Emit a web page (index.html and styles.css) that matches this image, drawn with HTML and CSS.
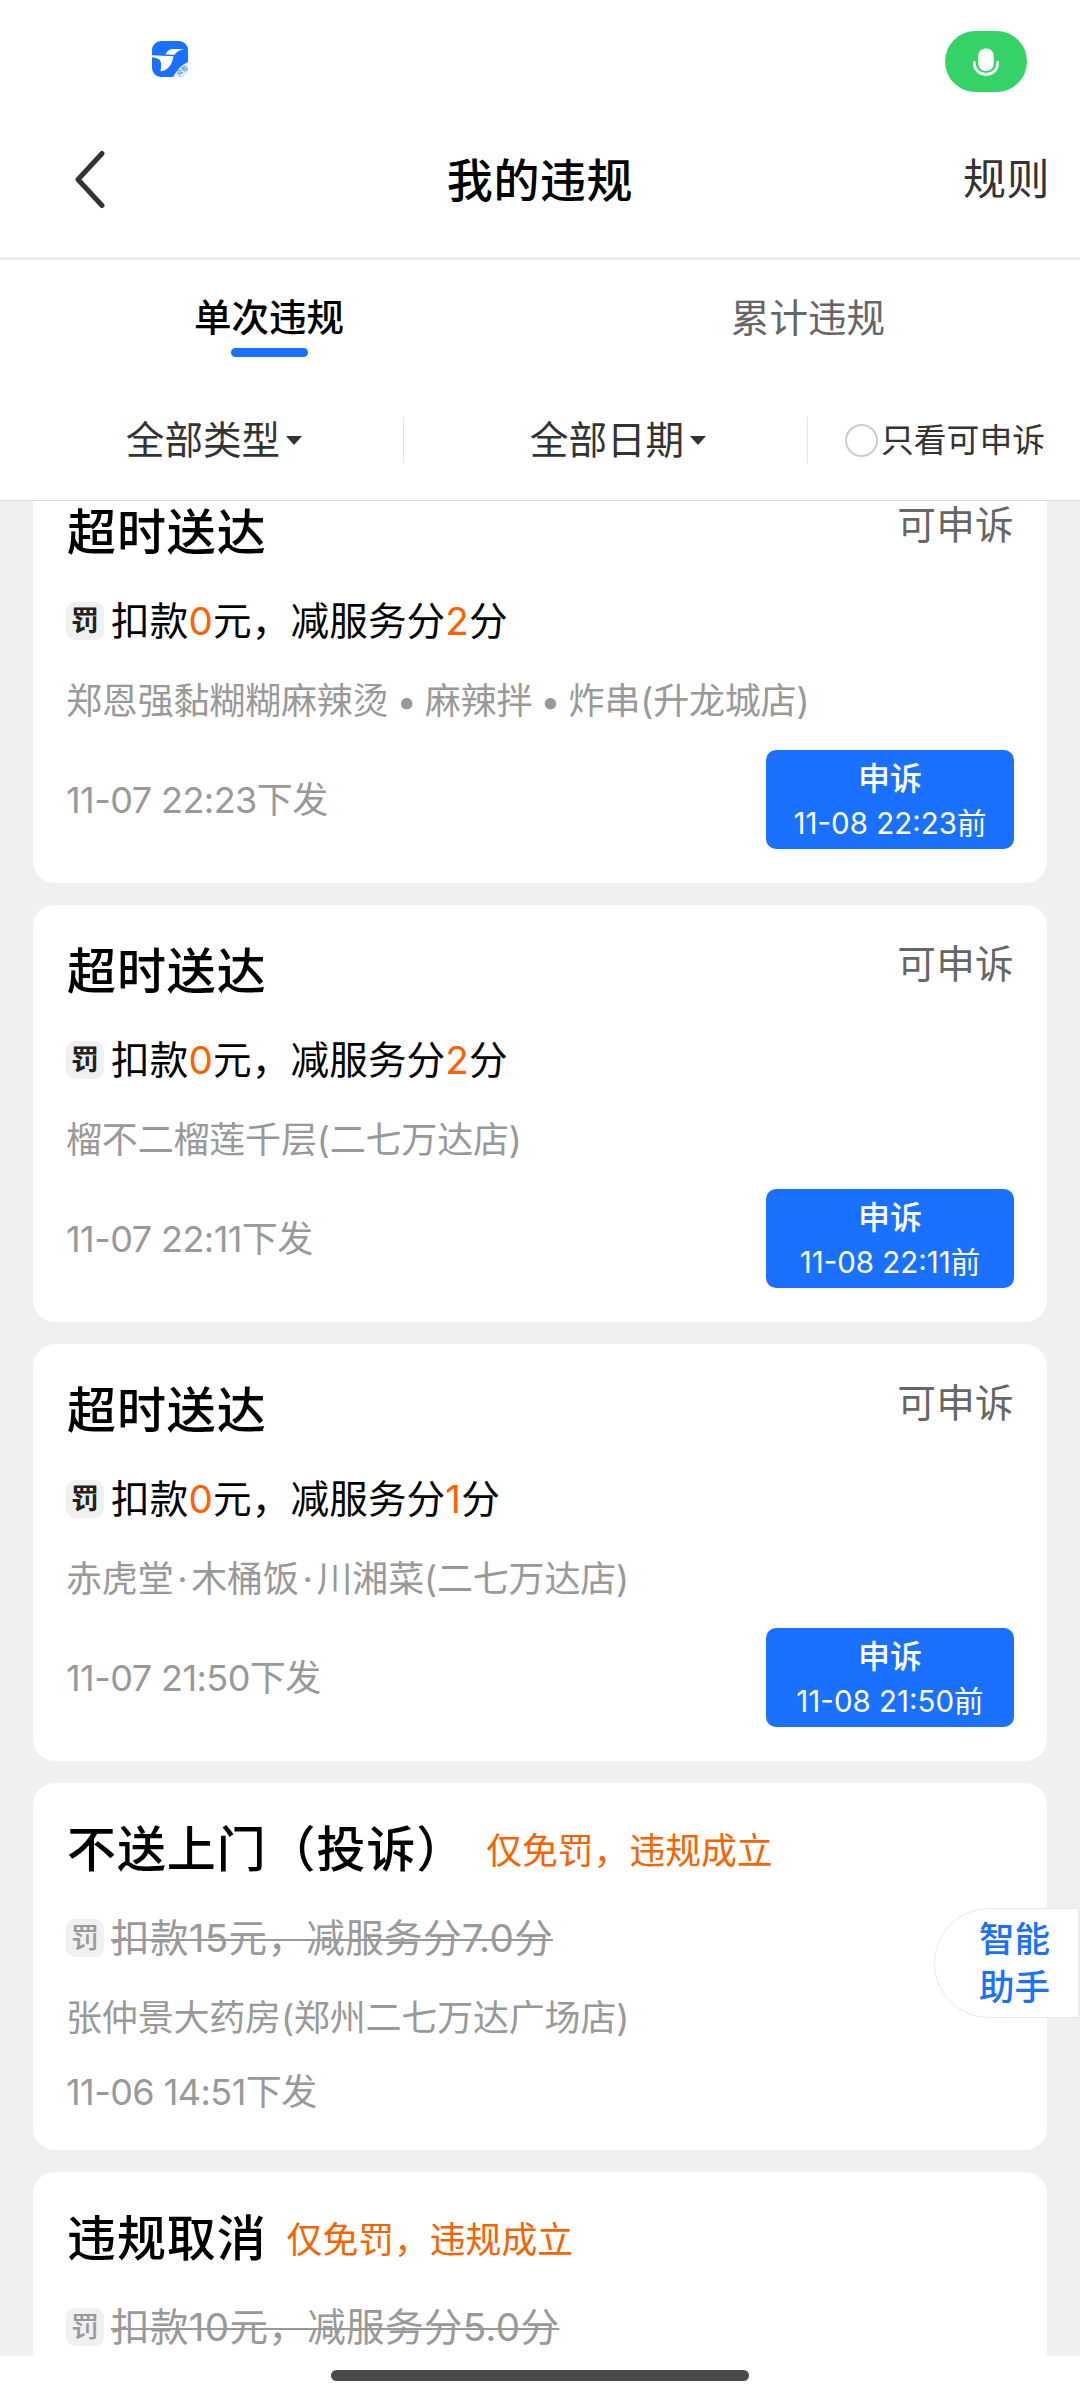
FILE: index.html
```html
<!DOCTYPE html>
<html lang="zh-CN">
<head>
<meta charset="utf-8">
<title>我的违规</title>
<link rel="stylesheet" href="styles.css">
</head>
<body>
<div class="screen">
  <div class="status">
    <svg class="app-icon" width="36" height="36" viewBox="0 0 36 36">
      <defs><clipPath id="tile"><rect width="36" height="36" rx="9"/></clipPath></defs>
      <g clip-path="url(#tile)">
        <rect width="36" height="36" fill="#1a70ff"/>
        <path d="M36 21C29 24 25 29 21 36H36Z" fill="#e3eeff"/>
        <path d="M13.500 13.600C15 9.500 18 8 22 8L32.500 8.200C27 9 24.500 11 22.500 13.800Z" fill="#fff"/>
        <path d="M0 14.200L21.500 15.200C20.500 22 17 29.500 8.500 30.300C9.800 24 9 19.500 7 18.300C5 17 2.500 16.800 0 16.300Z" fill="#fff"/>
        <text class="app-mark" x="26.500" y="35" transform="rotate(-38 26.500 35)">众包</text>
      </g>
    </svg>
    <div class="mic">
      <svg width="28" height="30" viewBox="0 0 28 30">
        <rect x="6.300" y="1.500" width="15.400" height="22.500" rx="7.200" fill="#fff"/>
        <path d="M2.300 15.500C2.300 23 7.500 27.500 14 27.500S25.700 23 25.700 15.500" fill="none" stroke="#fff" stroke-width="2.800" stroke-linecap="round"/>
      </svg>
    </div>
  </div>

  <header class="header">
    <svg class="back" width="34" height="60" viewBox="0 0 34 60"><path d="M28 4.500L4 30.500L28 56.500" fill="none" stroke="#333" stroke-width="5" stroke-linecap="round" stroke-linejoin="round"/></svg>
    <h1 class="header-title">我的违规</h1>
    <span class="rules">规则</span>
  </header>

  <nav class="tabs">
    <div class="tab tab-active">单次违规</div>
    <div class="tab">累计违规</div>
  </nav>

  <div class="filters">
    <div class="filter">全部类型<i class="caret"></i></div>
    <div class="filter">全部日期<i class="caret"></i></div>
    <div class="filter filter-check"><i class="radio"></i>只看可申诉</div>
  </div>

  <main class="list">
    <article class="card">
      <div class="card-head"><h2>超时送达</h2><span class="state">可申诉</span></div>
      <div class="penalty"><b class="badge">罚</b><span>扣款<em>0</em>元，减服务分<em>2</em>分</span></div>
      <div class="shop">郑恩强黏糊糊麻辣烫 • 麻辣拌 • 炸串(升龙城店)</div>
      <div class="foot"><span class="date">11-07 22:23下发</span><div class="appeal"><strong>申诉</strong><span>11-08 22:23前</span></div></div>
    </article>
    <article class="card">
      <div class="card-head"><h2>超时送达</h2><span class="state">可申诉</span></div>
      <div class="penalty"><b class="badge">罚</b><span>扣款<em>0</em>元，减服务分<em>2</em>分</span></div>
      <div class="shop">榴不二榴莲千层(二七万达店)</div>
      <div class="foot"><span class="date">11-07 22:11下发</span><div class="appeal"><strong>申诉</strong><span>11-08 22:11前</span></div></div>
    </article>
    <article class="card">
      <div class="card-head"><h2>超时送达</h2><span class="state">可申诉</span></div>
      <div class="penalty"><b class="badge">罚</b><span>扣款<em>0</em>元，减服务分<em>1</em>分</span></div>
      <div class="shop">赤虎堂<span class="dot">·</span>木桶饭<span class="dot">·</span>川湘菜(二七万达店)</div>
      <div class="foot"><span class="date">11-07 21:50下发</span><div class="appeal"><strong>申诉</strong><span>11-08 21:50前</span></div></div>
    </article>
    <article class="card">
      <div class="card-head"><h2>不送上门（投诉）</h2><span class="result">仅免罚，违规成立</span></div>
      <div class="penalty waived"><b class="badge">罚</b><span class="struck">扣款15元，减服务分7.0分</span></div>
      <div class="shop">张仲景大药房(郑州二七万达广场店)</div>
      <div class="foot foot-plain"><span class="date">11-06 14:51下发</span></div>
    </article>
    <article class="card">
      <div class="card-head"><h2>违规取消</h2><span class="result">仅免罚，违规成立</span></div>
      <div class="penalty waived"><b class="badge">罚</b><span class="struck">扣款10元，减服务分5.0分</span></div>
    </article>
  </main>

  <div class="home-area"><div class="home-bar"></div></div>
  <div class="assistant">智能<br>助手</div>
</div>
</body>
</html>
```
FILE: styles.css
```css
* { box-sizing: border-box; }
body { margin: 0; background: #fff; }
h1, h2 { margin: 0; font-weight: 500; }
em, i { font-style: normal; }

.screen {
  position: relative;
  display: flex;
  flex-direction: column;
  width: 1080px;
  height: 2400px;
  overflow: hidden;
  background: #fff;
  color: #000;
  font-family: Inter, "Noto Sans CJK SC", sans-serif;
  white-space: nowrap;
}

/* status bar */
.status {
  display: flex;
  justify-content: space-between;
  align-items: flex-start;
  height: 100px;
  padding: 31px 53px 0 152px;
}
.app-icon { margin-top: 10px; }
.app-mark { font-size: 6px; font-weight: 700; fill: #4f8ff5; }
.mic {
  display: flex;
  justify-content: center;
  align-items: center;
  width: 82px;
  height: 61px;
  border-radius: 31px;
  background: #35d267;
}

/* header */
.header {
  display: grid;
  grid-template-columns: 1fr auto 1fr;
  align-items: center;
  height: 160px;
  padding: 1px 31px 0;
  border-bottom: 3px solid #eee;
}
.header-title { padding-top: 2px; font-size: 46px; line-height: 60px; letter-spacing: .6px; }
.back { margin-left: 43px; }
.rules { justify-self: end; color: #333; font-size: 43px; line-height: 60px; letter-spacing: .5px; margin-right: -1px; }

/* tabs */
.tabs { display: flex; height: 118px; }
.tab {
  display: flex;
  flex: 1;
  flex-direction: column;
  align-items: center;
  padding: 33px 3px 0 0;
  color: #666;
  font-size: 38.600px;
  line-height: 50px;
}
.tab-active { padding-right: 1px; color: #000; font-size: 37.500px; font-weight: 500; }
.tab-active::after {
  content: "";
  width: 77px;
  height: 9px;
  margin-top: 5px;
  border-radius: 5px;
  background: #1a70ff;
}

/* filters */
.filters {
  display: flex;
  height: 123px;
  padding-top: 39px;
  border-bottom: 1px solid #ddd;
}
.filter {
  display: flex;
  justify-content: center;
  align-items: center;
  width: 404px;
  height: 46px;
  padding-left: 25px;
  border-right: 1px solid #e4e4e4;
  color: #333;
  font-size: 38.600px;
  line-height: 44px;
}
.filter-check {
  width: auto;
  flex: 1;
  justify-content: flex-start;
  gap: 3px;
  padding-left: 37px;
  border: 0;
  font-size: 32.800px;
}
.caret {
  margin-left: 6px;
  border: 8.500px solid transparent;
  border-top: 9px solid #333;
  border-bottom: 0;
}
.radio { width: 33px; height: 33px; border: 2px solid #ccc; border-radius: 50%; }

/* violation list */
.list {
  display: flex;
  flex-direction: column;
  gap: 22px;
  height: 1855px;
  padding: 0 33px;
  overflow: hidden;
  background: #f0f0f0;
}
.card { flex: none; padding: 36px 33px 34px; border-radius: 22px; background: #fff; }
.card:first-child { margin-top: -35px; }
.card-head { display: flex; align-items: flex-start; height: 60px; }
.card-head h2 { padding-left: 1px; font-size: 49px; line-height: 62px; letter-spacing: .9px; }
.state { margin-left: auto; color: #666; font-size: 38.600px; line-height: 46px; letter-spacing: .3px; }
.result { margin: 6px 0 0 20px; color: #f76300; font-size: 35.800px; line-height: 52px; }
.penalty {
  display: flex;
  align-items: center;
  gap: 7px;
  margin-top: 34px;
  font-size: 38.600px;
  line-height: 50px;
  letter-spacing: .15px;
}
.penalty em { color: #ff6000; }
.badge {
  width: 38px;
  height: 38px;
  border-radius: 9px;
  background: #f0f0f0;
  color: #222;
  font-size: 28px;
  font-weight: 700;
  line-height: 38px;
  text-align: center;
}
.waived, .waived .badge { color: #999; }
.waived .badge { font-weight: 500; }
.struck { letter-spacing: .3px; text-decoration: line-through; text-decoration-thickness: 2px; }
.shop {
  margin-top: 32px;
  color: #999;
  font-size: 36px;
  line-height: 46px;
  letter-spacing: -.18px;
  word-spacing: -1.800px;
}
.dot { padding: 0 3.800px; }
.foot { display: flex; justify-content: space-between; align-items: center; margin-top: 26px; }
.foot-plain { margin: 28px 0 1px; }
.date { padding-top: 1px; color: #999; font-size: 36px; line-height: 45px; letter-spacing: -.55px; }
.appeal {
  display: flex;
  flex-direction: column;
  align-items: center;
  width: 248px;
  height: 99px;
  padding-top: 7px;
  border-radius: 10px;
  background: #1a70ff;
  color: #fff;
  font-size: 29.500px;
  line-height: 44px;
}
.appeal strong { font-size: 32px; font-weight: 500; }

/* system gesture area */
.home-area { display: flex; flex: 1; justify-content: center; padding-top: 14px; }
.home-bar { width: 418px; height: 11px; border-radius: 6px; background: #4a4a4a; }

/* floating assistant entry */
.assistant {
  position: absolute;
  top: 1908px;
  right: 1px;
  width: 145px;
  height: 110px;
  padding: 7px 0 0 44px;
  border: 1px solid #e8e8e8;
  border-radius: 55px 0 0 55px;
  background: #fff;
  color: #1a70ff;
  font-size: 35.500px;
  font-weight: 500;
  line-height: 48px;
}
```
